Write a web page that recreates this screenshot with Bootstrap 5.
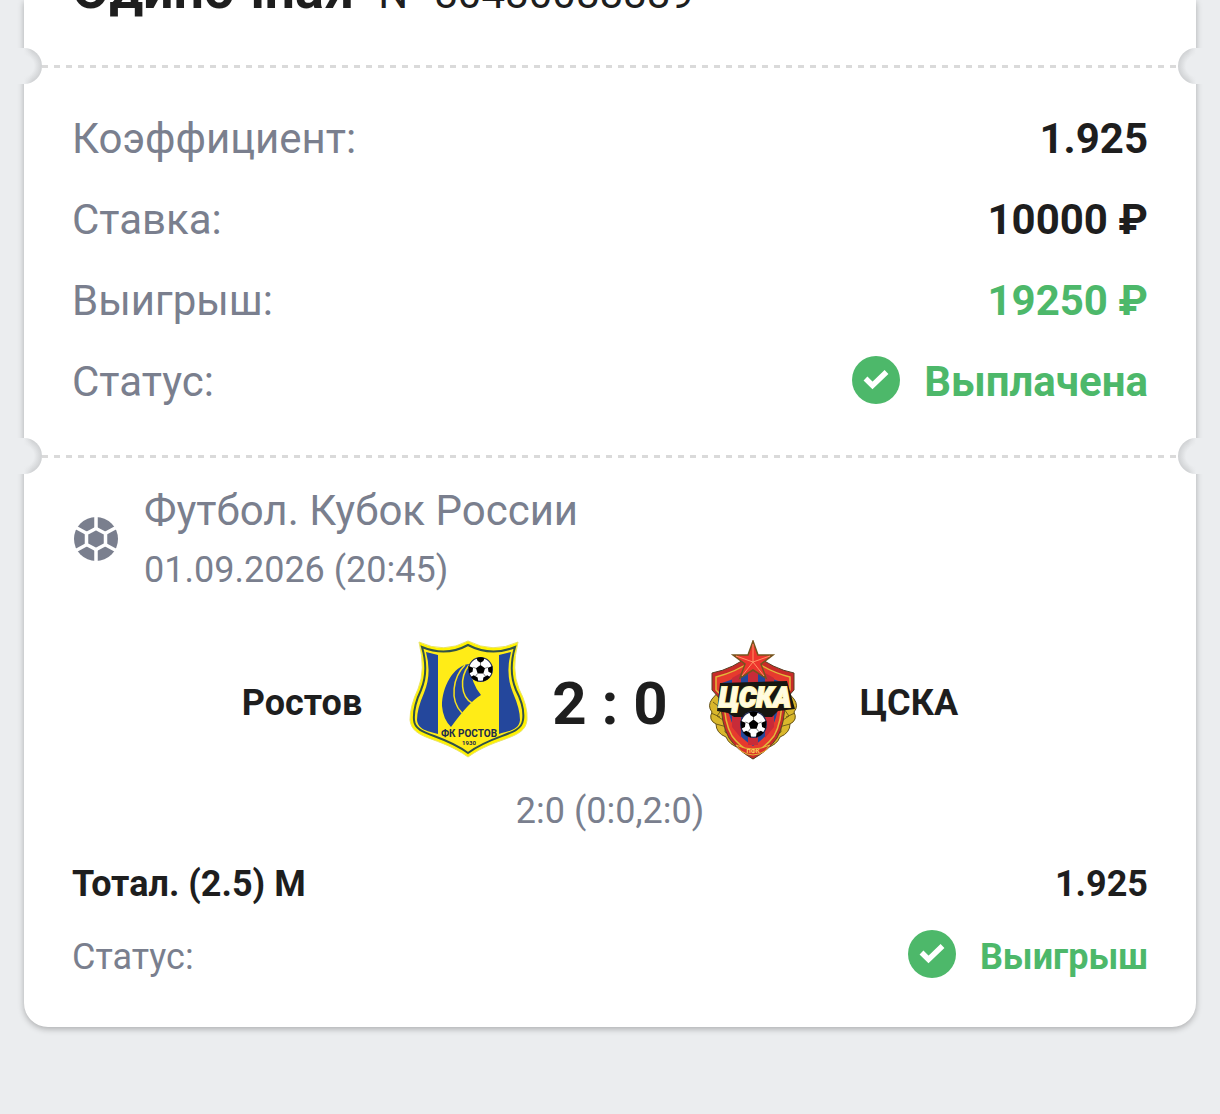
<!DOCTYPE html>
<html lang="ru">
<head>
<meta charset="utf-8">
<meta name="viewport" content="width=device-width, initial-scale=1">
<title>Купон</title>
<link href="https://cdn.jsdelivr.net/npm/bootstrap@5.3.0/dist/css/bootstrap.min.css" rel="stylesheet">
<script src="https://cdn.jsdelivr.net/npm/bootstrap@5.3.0/dist/js/bootstrap.bundle.min.js"></script>
<style>
  body { background: #ebedef; color: #1e1e1e; font-family: Roboto, "Liberation Sans", sans-serif; padding-bottom: 32px; }
  .coupon { background: #fff; border-radius: 0 0 24px 24px; box-shadow: 0 2px 6px rgba(0,0,0,.28); padding-bottom: 33px; }
  .side { padding-left: 48px; padding-right: 48px; }
  .coupon-head { height: 48px; padding-bottom: 26px; }
  .coupon-title { font-size: 54px; line-height: 56px; }
  .coupon-number { font-size: 42px; line-height: 56px; }
  .tear { height: 36px; margin-left: -8px; margin-right: -8px; }
  .notch { width: 26px; height: 36px; flex: none; }
  .notch-l { border-radius: 0 18px 18px 0; background: linear-gradient(90deg, #ebedef 8px, transparent 16px), radial-gradient(circle at 8px 18px, #ebedef 10px, #cfd1d3 18px); }
  .notch-r { border-radius: 18px 0 0 18px; background: linear-gradient(270deg, #ebedef 8px, transparent 16px), radial-gradient(circle at 18px 18px, #ebedef 10px, #cfd1d3 18px); }
  .dashes { height: 3px; background: repeating-linear-gradient(90deg, #dadada 0 6px, transparent 6px 12px); }
  .totals { padding-top: 14px; padding-bottom: 16px; }
  .line-lg { font-size: 42px; line-height: 81px; }
  .line-md { font-size: 36px; line-height: 73px; }
  .muted { color: #7a7f8e; }
  .won { color: #4db86a; }
  .event { padding-top: 8px; }
  .league { font-size: 42px; line-height: 58px; }
  .kickoff { font-size: 36px; line-height: 60px; }
  .match { padding-top: 40px; }
  .club { font-size: 36px; line-height: 48px; padding-top: 6px; }
  .club-home { padding-right: 22px; }
  .club-away { padding-left: 48px; }
  .score { font-size: 60px; line-height: 72px; padding-top: 8px; }
  .halves { font-size: 36px; line-height: 48px; padding-top: 27px; padding-bottom: 13px; }
</style>
</head>
<body>
<svg width="0" height="0" class="position-absolute" aria-hidden="true">
  <symbol id="tick" viewBox="0 0 48 48">
    <circle cx="24" cy="24" r="24" fill="#4db86a"/>
    <path d="M13.500 22.500 20.500 29.500 34.500 16" fill="none" stroke="#fff" stroke-width="5.500"/>
  </symbol>
  <symbol id="ball" viewBox="-22 -22 44 44">
    <circle r="21" fill="#fff" stroke="#222b55" stroke-width="2"/>
    <path d="M0-8 8-2 5 7H-5L-8-2ZM-7-20Q0-23 7-20L5-15 0-12-5-15ZM21-6 20 7 14 4 13-3ZM-21-6-20 7-14 4-13-3ZM12 18 4 21 5 14 12 10 17 13ZM-12 18-4 21-5 14-12 10-17 13Z"/>
    <path d="M0-8V-13M8-2 13-4M5 7 9 12M-5 7-9 12M-8-2-13-4" stroke="#222" stroke-width="1"/>
  </symbol>
</svg>
<main class="coupon mx-4">
  <header class="coupon-head side d-flex align-items-end">
    <div class="d-flex align-items-baseline gap-4">
      <h1 class="coupon-title fw-bold m-0">Одиночная</h1>
      <span class="coupon-number">N° 80480088889</span>
    </div>
  </header>
  <div class="tear d-flex align-items-center"><span class="notch notch-l"></span><span class="dashes flex-grow-1"></span><span class="notch notch-r"></span></div>

  <section class="totals side">
    <div class="line-lg d-flex justify-content-between"><span class="muted">Коэффициент:</span><span class="fw-bold">1.925</span></div>
    <div class="line-lg d-flex justify-content-between"><span class="muted">Ставка:</span><span class="fw-bold">10000 ₽</span></div>
    <div class="line-lg d-flex justify-content-between"><span class="muted">Выигрыш:</span><span class="fw-bold won">19250 ₽</span></div>
    <div class="line-lg d-flex justify-content-between"><span class="muted">Статус:</span><span class="d-flex align-items-center gap-4 fw-bold won"><svg class="mb-1" width="48" height="48" aria-hidden="true"><use href="#tick"/></svg>Выплачена</span></div>
  </section>
  <div class="tear d-flex align-items-center"><span class="notch notch-l"></span><span class="dashes flex-grow-1"></span><span class="notch notch-r"></span></div>

  <section class="event side">
    <div class="d-flex align-items-center gap-4 muted">
      <svg class="mb-1" width="48" height="48" viewBox="-24 -24 48 48" aria-hidden="true">
        <circle r="22" fill="#7a7f8e"/>
        <path d="M0-10.500 9.500-5.500V5.500L0 10.500-9.500 5.500V-5.500Z" fill="none" stroke="#fff" stroke-width="3.500"/>
        <path d="M0-24V-11M0 11V24M9-5.500 21-12M9 5.500 21 12M-9-5.500-21-12M-9 5.500-21 12" stroke="#fff" stroke-width="3.500"/>
      </svg>
      <div><div class="league">Футбол. Кубок России</div><div class="kickoff">01.09.2026 (20:45)</div></div>
    </div>

    <div class="match d-flex align-items-center gap-4">
      <div class="col d-flex align-items-center justify-content-end">
        <span class="club club-home fw-bold me-4">Ростов</span>
        <svg width="120" height="120" viewBox="-1 0 120 120" role="img" aria-label="ФК Ростов">
          <path d="M10 2Q35 14 59 1Q84 14 109 2Q102 30 110 49Q119 66 118 80C116 100 88 96 59 117C30 96 3 100 1 80Q1 66 9 49Q17 30 10 2Z" fill="#fff200" stroke="#e9e36b" stroke-width="1"/>
          <path d="M13 7Q37 17 59 5Q82 17 106 7Q99 31 107 50Q116 67 114 80C112 96 86 93 59 113C32 93 6 96 5 80Q4 67 12 50Q20 31 13 7Z" fill="#ffec17" stroke="#315149" stroke-width="2"/>
          <path d="M17 12 29 15V94C19 91 9 90 8 80Q8 69 15 53Q23 34 17 12ZM102 12 90 15V94C100 91 110 90 111 80Q111 69 104 53Q96 34 102 12Z" fill="#24479c"/>
          <path d="M60 24C44 26 33 47 33 66Q34 79 42 87Q60 62 72 55Q63 45 60 24Z" fill="#24479c"/>
          <path d="M56 25C44 37 40 60 53 73M60 25C50 38 52 57 63 63" fill="none" stroke="#f7e11b" stroke-width="1.500"/>
          <svg x="59" y="17" width="25" height="25"><use href="#ball"/></svg>
          <text x="60" y="97" text-anchor="middle" font-family="Roboto, sans-serif" font-size="10" font-weight="700" fill="#202a4c">ФК РОСТОВ</text>
          <text x="60" y="105" text-anchor="middle" font-family="Roboto, sans-serif" font-size="6" font-weight="700" fill="#202a4c">1930</text>
        </svg>
      </div>
      <strong class="score">2 : 0</strong>
      <div class="col d-flex align-items-center">
        <svg width="120" height="120" viewBox="-1 0 120 120" role="img" aria-label="ЦСКА">
          <path d="M27 50 19 59Q14 66 19 72 15 80 23 84 23 93 33 97 36 105 47 108L60 119 73 108Q84 105 87 97 97 93 97 84 105 80 101 72 106 66 101 59L93 50Z" fill="#d9b72c" stroke="#665218" stroke-width="1"/>
          <path d="M20 62 29 69 24 76 33 82 32 92 42 98M100 62 91 69 96 76 87 82 88 92 78 98M18 73 27 77M102 73 93 77M23 84 34 87M97 84 86 87" fill="none" stroke="#725f19"/>
          <path d="M19 33Q40 29 60 13Q80 29 101 33V50L92 60Q92 84 84 98Q76 110 60 119Q44 110 36 98Q28 84 28 60L19 50Z" fill="#c82b28" stroke="#574225"/>
          <path d="M23 37Q43 32 60 20Q77 32 97 37V50L89 58Q89 82 81 96Q74 106 60 114Q46 106 39 96Q31 82 31 58L23 50Z" fill="#e63a2e" stroke="#e2b83a" stroke-width="1.500"/>
          <path d="M29 43Q46 38 60 27Q74 38 91 43V52L85 60Q86 90 60 106Q34 90 35 60L29 52Z" fill="#24489b"/>
          <path d="M39 38 48 33V98L39 87ZM72 33 81 38V87L72 98Z" fill="#c82b38"/>
          <path d="M55 28H65V105H55Z" fill="#c82b38"/>
          <path d="M27 43 94 41 102 69 85 71 79 77H41L35 73 24 71Z" fill="#171611"/>
          <text x="62" y="67" text-anchor="middle" font-family="Roboto, sans-serif" font-size="27" font-style="italic" font-weight="900" fill="#fffbe0" stroke="#fff5b0" stroke-width="2" paint-order="stroke">ЦСКА</text>
          <path d="M60 1 65 15 80 15 68 24 73 38 60 30 47 38 52 24 40 15 55 15Z" fill="#ed352d" stroke="#75551e" stroke-width="1.500"/>
          <path d="M60 22V4M60 22 77 16M60 22 71 36M60 22 49 36M60 22 43 16" stroke="#ff9365"/>
          <svg x="47" y="71" width="27" height="27"><use href="#ball"/></svg>
          <path d="M43 105Q60 113 77 105L72 111Q60 119 48 111Z" fill="#d83128" stroke="#e4bc3a"/>
          <text x="60" y="113" text-anchor="middle" font-family="Roboto, sans-serif" font-size="6" font-weight="700" fill="#ffd75c">ПФК</text>
        </svg>
        <span class="club club-away fw-bold">ЦСКА</span>
      </div>
    </div>
    <div class="halves muted text-center">2:0 (0:0,2:0)</div>
    <div class="line-md d-flex justify-content-between fw-bold"><span>Тотал. (2.5) М</span><span>1.925</span></div>
    <div class="line-md d-flex justify-content-between"><span class="muted">Статус:</span><span class="d-flex align-items-center gap-4 fw-bold won"><svg class="mb-2" width="48" height="48" aria-hidden="true"><use href="#tick"/></svg>Выигрыш</span></div>
  </section>
</main>
</body>
</html>
